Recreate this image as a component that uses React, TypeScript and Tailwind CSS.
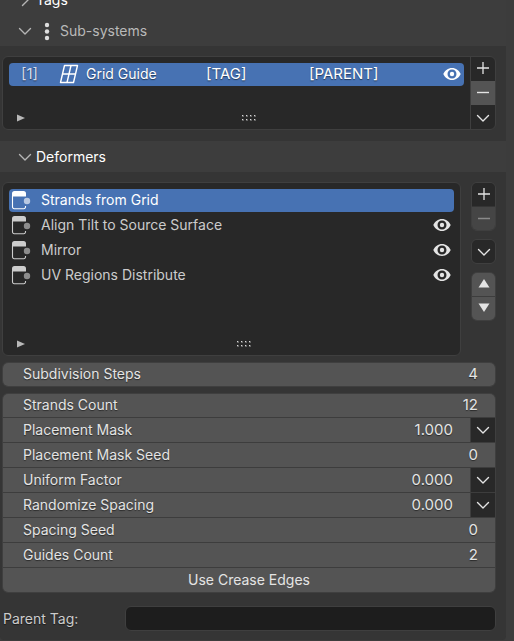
import { useId, useState } from "react";
import type { ReactNode } from "react";

function Svg({ size = 20, children }: { size?: number; children: ReactNode }) {
  return (
    <svg width={size} height={size} viewBox={`0 0 ${size} ${size}`} fill="none" aria-hidden="true" className="block shrink-0">
      {children}
    </svg>
  );
}

function ChevronDown() {
  return (
    <Svg size={16}>
      <path d="M2.5 5.5 8 11l5.5-5.5" stroke="currentColor" strokeWidth="1.4" strokeLinecap="round" strokeLinejoin="round" />
    </Svg>
  );
}

function ChevronRight() {
  return (
    <Svg size={16}>
      <path d="M5.5 2.5 11 8l-5.5 5.5" stroke="currentColor" strokeWidth="1.4" strokeLinecap="round" strokeLinejoin="round" />
    </Svg>
  );
}

function Plus() {
  return (
    <Svg size={16}>
      <path d="M8 2v12M2 8h12" stroke="currentColor" strokeWidth="1.3" />
    </Svg>
  );
}

function Minus() {
  return (
    <Svg size={16}>
      <path d="M2 8.5h12" stroke="currentColor" strokeWidth="1.4" />
    </Svg>
  );
}

function Triangle({ up = false }: { up?: boolean }) {
  return (
    <Svg size={16}>
      <path d={up ? "M8 3l5.5 8.5h-11z" : "M8 12 2.500 3.500h11z"} fill="currentColor" />
    </Svg>
  );
}

function Eye() {
  return (
    <Svg size={18}>
      <path
        fillRule="evenodd"
        fill="currentColor"
        d="M9 3C5 3 2 5.500.300 9 2 12.500 5 15 9 15s7-2.500 8.700-6C16 5.500 13 3 9 3Zm0 1.500c2.700 0 4.500 2 4.500 4.500s-1.800 4.500-4.500 4.500S4.500 11.500 4.500 9 6.300 4.500 9 4.500Z"
      />
      <circle cx="9" cy="9" r="2.200" fill="currentColor" />
    </Svg>
  );
}

function GridIcon() {
  return (
    <Svg>
      <path d="M5.500 1.500h13l-4 17H1.500z" stroke="currentColor" strokeWidth="1.400" strokeLinejoin="round" />
      <path d="M12 1.500l-4 17M3.500 10h13" stroke="currentColor" strokeWidth="1.400" />
    </Svg>
  );
}

function DeformerIcon() {
  return (
    <Svg>
      <path d="M1 6.500V3.500A2.500 2.500 0 0 1 3.500 1h9A2.500 2.500 0 0 1 15 3.500V6.500z" fill="currentColor" />
      <path d="M1.500 6v11a1.700 1.700 0 0 0 1.700 1.700h9.600a1.700 1.700 0 0 0 1.700-1.700V16" stroke="currentColor" strokeWidth="1.100" />
      <circle cx="16" cy="11" r="3.200" fill="currentColor" fillOpacity=".62" />
    </Svg>
  );
}

function Grip() {
  return (
    <Svg size={16}>
      {[1, 5, 9, 13].map((x) => (
        <g key={x} fill="#d8d8d8">
          <path d={`M${x} 5h2v2h-2zM${x} 9h2v2h-2z`} fillOpacity=".35" />
          <path d={`M${x} 5h1v1h-1zM${x} 9h1v1h-1z`} />
        </g>
      ))}
    </Svg>
  );
}

function ListFooter() {
  return (
    <div className="flex h-[23px] items-center pl-2">
      <button type="button" aria-label="Show filter options" className="flex w-4 text-[#b8b8b8]">
        <Svg size={8}>
          <path d="M0 0.500v7L8 4z" fill="currentColor" />
        </Svg>
      </button>
      <button type="button" aria-label="Resize list" className="mx-auto flex">
        <Grip />
      </button>
    </div>
  );
}

function PanelHeader({ title, open = true, children, tone }: { title: string; open?: boolean; children?: ReactNode; tone: string }) {
  return (
    <button type="button" aria-expanded={open} className={`flex h-[31px] w-full shrink-0 items-center bg-[#3d3d3d] pl-[17px] ${tone}`}>
      <span className="text-[#b5b5b5]">{open ? <ChevronDown /> : <ChevronRight />}</span>
      {children}
      <span className="pl-[3px]">{title}</span>
    </button>
  );
}

function ToolButton({ label, className, disabled, children }: { label: string; className: string; disabled?: boolean; children: ReactNode }) {
  return (
    <button type="button" aria-label={label} disabled={disabled} className={`flex w-full items-center justify-center ${className}`}>
      {children}
    </button>
  );
}

function NumberField({ label, value, menu = false }: { label: string; value: string; menu?: boolean }) {
  const id = useId();
  const [current, setCurrent] = useState(value);
  return (
    <div className="group flex h-6 gap-px bg-[#3d3d3d] first:h-[23px]">
      <div className="flex min-w-0 flex-1 items-center bg-[#545454] pr-[17px] pl-5 group-first:pb-px">
        <label htmlFor={id} className="flex-1 whitespace-nowrap">
          {label}
        </label>
        <input
          id={id}
          value={current}
          onChange={(event) => setCurrent(event.target.value)}
          className="w-20 bg-transparent text-right text-[15px] leading-5 outline-none text-shadow-[0_1px_1px_rgb(0_0_0/0.5)]"
        />
      </div>
      {menu && (
        <button type="button" aria-label={`${label} attribute`} className="flex w-6 items-center justify-center bg-[#282828]">
          <ChevronDown />
        </button>
      )}
    </div>
  );
}

const deformers = ["Strands from Grid", "Align Tilt to Source Surface", "Mirror", "UV Regions Distribute"];

const fields = [
  { label: "Strands Count", value: "12" },
  { label: "Placement Mask", value: "1.000", menu: true },
  { label: "Placement Mask Seed", value: "0" },
  { label: "Uniform Factor", value: "0.000", menu: true },
  { label: "Randomize Spacing", value: "0.000", menu: true },
  { label: "Spacing Seed", value: "0" },
  { label: "Guides Count", value: "2" },
];

export default function App() {
  const [selected, setSelected] = useState(0);
  return (
    <div className="min-h-screen bg-[#3c3c3c] pr-2 font-['Inter',sans-serif] text-[14px] leading-5 text-[#e4e4e4] text-shadow-[0_1px_1px_rgb(0_0_0/0.5)]">
      <main className="rounded-b bg-[#353535]">
        <div className="flex h-[15px] flex-col justify-end overflow-hidden">
          <PanelHeader title="Tags" open={false} tone="text-white" />
        </div>
        <PanelHeader title="Sub-systems" tone="text-[#b9b9b9]">
          <span className="pl-1 text-[#dedede]">
            <Svg>
              <circle cx="10" cy="4" r="2.200" fill="currentColor" />
              <circle cx="10" cy="10.500" r="2.200" fill="currentColor" />
              <circle cx="10" cy="17" r="2.200" fill="currentColor" />
            </Svg>
          </span>
        </PanelHeader>

        <section className="pt-2.5 pr-2.5 pb-[11px] pl-0.5">
          <div className="flex rounded-md border border-[#3f3f3f] bg-[#282828]">
            <div className="flex min-w-0 flex-1 flex-col justify-between px-1.5 pt-1.5">
              <div className="flex h-[23px] items-center rounded bg-[#4772b3] pr-[3px] pb-px pl-3 text-white">
                <span className="w-[38px] text-[15px] text-[#d5dced]">[1]</span>
                <GridIcon />
                <span className="flex-1 pl-[7px]">Grid Guide</span>
                <span className="w-[103px] text-[15px]">[TAG]</span>
                <span className="w-[134px] text-[15px]">[PARENT]</span>
                <button type="button" aria-label="Toggle Grid Guide visibility">
                  <Eye />
                </button>
              </div>
              <ListFooter />
            </div>
            <div className="flex w-[25px] flex-col gap-px border-l border-[#3f3f3f]">
              <ToolButton label="Add sub-system" className="h-[23px] pb-px">
                <Plus />
              </ToolButton>
              <ToolButton label="Remove sub-system" className="h-6 bg-[#545454] pb-0.5">
                <Minus />
              </ToolButton>
              <ToolButton label="Sub-system menu" className="h-[23px]">
                <ChevronDown />
              </ToolButton>
            </div>
          </div>
        </section>

        <PanelHeader title="Deformers" tone="text-white" />

        <section className="flex flex-col gap-1.5 pt-2.5 pr-2.5 pb-[9px] pl-0.5">
          <div className="flex gap-2.5">
            <div className="flex h-[174px] min-w-0 flex-1 flex-col justify-between rounded-md border border-[#3f3f3f] bg-[#282828] px-1.5 pt-1.5">
              <ul className="flex flex-col gap-0.5">
                {deformers.map((name, index) => (
                  <li
                    key={name}
                    className={`flex h-[23px] items-center rounded pr-[3px] pb-px pl-0.5 ${index === selected ? "bg-[#4772b3] text-white" : "text-[#cccccc]"}`}
                  >
                    <DeformerIcon />
                    <button type="button" onClick={() => setSelected(index)} className="flex-1 pl-2.5 text-left">
                      {name}
                    </button>
                    {index > 0 && (
                      <button type="button" aria-label={`Toggle ${name} visibility`} className="text-[#e4e4e4]">
                        <Eye />
                      </button>
                    )}
                  </li>
                ))}
              </ul>
              <ListFooter />
            </div>
            <div className="flex w-[25px] flex-col gap-2">
              <div className="flex flex-col gap-px overflow-hidden rounded-md border border-[#3f3f3f]">
                <ToolButton label="Add deformer" className="h-[23px] bg-[#282828] pb-px">
                  <Plus />
                </ToolButton>
                <ToolButton label="Remove deformer" disabled className="h-[23px] bg-[#454545] pb-px text-[#8a8a8a]">
                  <Minus />
                </ToolButton>
              </div>
              <div className="overflow-hidden rounded-md border border-[#3f3f3f]">
                <ToolButton label="Deformer menu" className="h-[23px] bg-[#282828]">
                  <ChevronDown />
                </ToolButton>
              </div>
              <div className="flex flex-col gap-px overflow-hidden rounded-md border border-[#3f3f3f] bg-[#3d3d3d]">
                <ToolButton label="Move up" className="h-[23px] bg-[#545454] pb-px">
                  <Triangle up />
                </ToolButton>
                <ToolButton label="Move down" className="h-[23px] bg-[#545454] pb-px">
                  <Triangle />
                </ToolButton>
              </div>
            </div>
          </div>

          <div className="overflow-hidden rounded-md border border-[#3f3f3f]">
            <NumberField label="Subdivision Steps" value="4" />
          </div>

          <div className="flex flex-col gap-px overflow-hidden rounded-md border border-[#3f3f3f] bg-[#3d3d3d]">
            {fields.map((field) => (
              <NumberField key={field.label} {...field} />
            ))}
            <button type="button" aria-pressed="false" className="h-6 bg-[#545454] text-center">
              Use Crease Edges
            </button>
          </div>

          <div className="flex items-center pt-[7px]">
            <label htmlFor="parent-tag" className="w-[123px] pl-px text-[#cccccc]">
              Parent Tag:
            </label>
            <input id="parent-tag" className="h-[25px] min-w-0 flex-1 rounded-md border border-[#3f3f3f] bg-[#1d1d1d] px-2 outline-none" />
          </div>
        </section>
      </main>
    </div>
  );
}
